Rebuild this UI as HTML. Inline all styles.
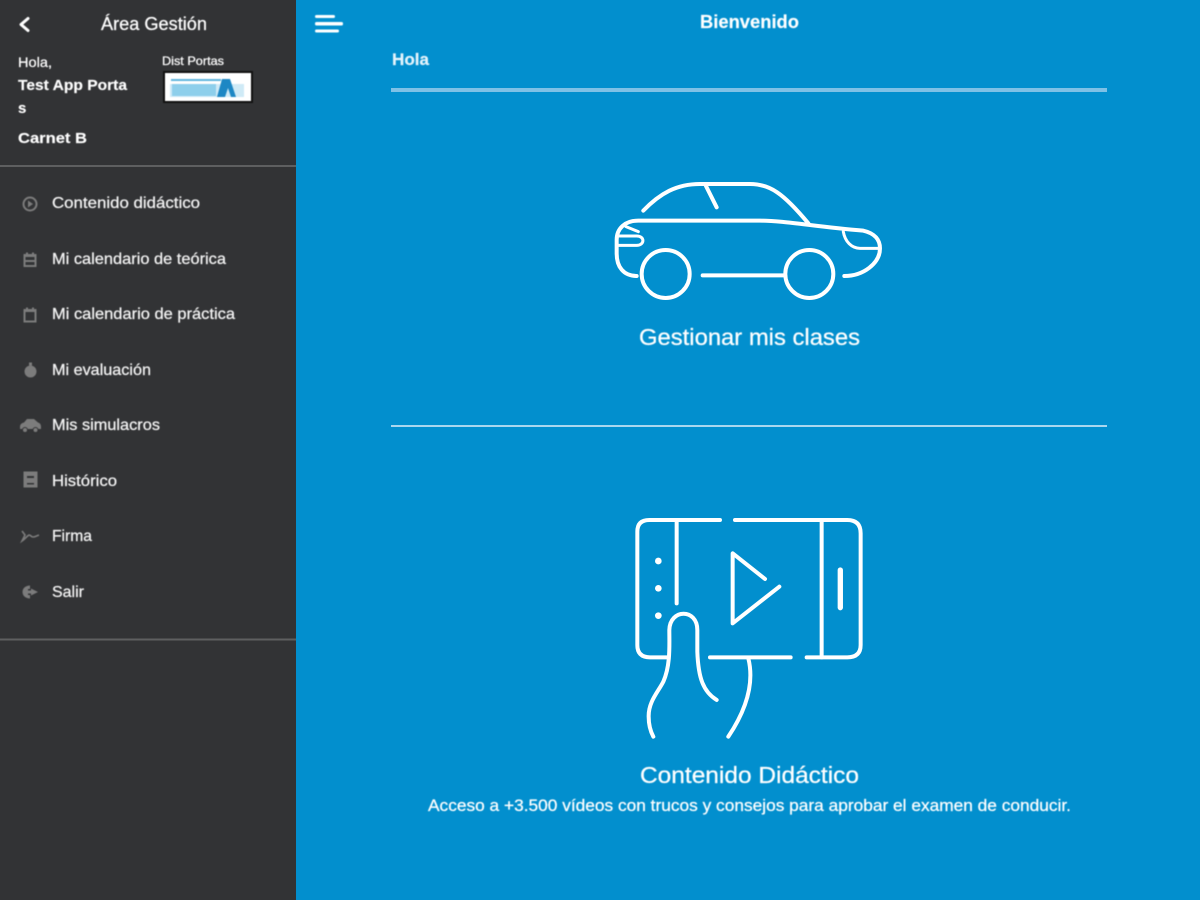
<!DOCTYPE html>
<html lang="es">
<head>
<meta charset="utf-8">
<title>Área Gestión</title>
<style>
html,body{margin:0;padding:0;width:1200px;height:900px;overflow:hidden;background:#028fce}
svg{display:block}
text{font-family:"Liberation Sans",sans-serif;fill:#fff;font-size:15px;stroke:#fff;stroke-width:.25px}
.b{font-weight:bold;stroke-width:.15px}
.m{font-size:16px;fill:#f4f4f4;stroke:#f4f4f4}
.blur{filter:blur(.6px)}
.ic{fill:#7c7c7c}
.ics{fill:none;stroke:#7c7c7c;stroke-width:2}
.l{fill:none;stroke:#fff;stroke-width:12;stroke-linecap:round;stroke-linejoin:round}
</style>
</head>
<body>
<svg width="1200" height="900" viewBox="0 0 1200 900" xmlns="http://www.w3.org/2000/svg">
<rect width="1200" height="900" fill="#028fce"/>
<rect width="296" height="900" fill="#323335"/>
<rect y="165" width="296" height="2" fill="#5e5f60"/>
<rect y="638.500" width="296" height="2" fill="#5e5f60"/>

<g class="blur">
<path d="M28 18.500L21 24.500L28 30.500" fill="none" stroke="#fff" stroke-width="3" stroke-linecap="round" stroke-linejoin="round"/>
<text x="101" y="30" style="font-size:18px" textLength="106" lengthAdjust="spacingAndGlyphs">Área Gestión</text>
<text x="18" y="67" style="font-size:14px" textLength="34" lengthAdjust="spacingAndGlyphs">Hola,</text>
<text class="b" x="18" y="90" style="font-size:15px" textLength="109" lengthAdjust="spacingAndGlyphs">Test App Porta</text>
<text class="b" x="18" y="113" style="font-size:15px">s</text>
<text class="b" x="18" y="143" style="font-size:15px" textLength="69" lengthAdjust="spacingAndGlyphs">Carnet B</text>
<text x="162" y="65" style="font-size:12px" textLength="62" lengthAdjust="spacingAndGlyphs">Dist Portas</text>

<rect x="163" y="71" width="90" height="32" fill="#111"/>
<rect x="165" y="73" width="86" height="28" fill="#fff"/>
<rect x="170" y="84" width="74" height="13" fill="#cfeaf6"/>
<rect x="171" y="79" width="50" height="2" fill="#5fb4dc"/>
<rect x="172" y="84" width="44" height="12" fill="#8ecfeb"/>
<path d="M217 97l5-18h8l6 18h-5l-3-9-3 9z" fill="#1d87c4"/>

<text class="m" x="52" y="208" textLength="148" lengthAdjust="spacingAndGlyphs">Contenido didáctico</text>
<text class="m" x="52" y="264" textLength="174" lengthAdjust="spacingAndGlyphs">Mi calendario de teórica</text>
<text class="m" x="52" y="319" textLength="183" lengthAdjust="spacingAndGlyphs">Mi calendario de práctica</text>
<text class="m" x="52" y="375" textLength="99" lengthAdjust="spacingAndGlyphs">Mi evaluación</text>
<text class="m" x="52" y="430" textLength="108" lengthAdjust="spacingAndGlyphs">Mis simulacros</text>
<text class="m" x="52" y="486" textLength="65" lengthAdjust="spacingAndGlyphs">Histórico</text>
<text class="m" x="52" y="541" textLength="40" lengthAdjust="spacingAndGlyphs">Firma</text>
<text class="m" x="52" y="597" textLength="32" lengthAdjust="spacingAndGlyphs">Salir</text>

<circle class="ics" cx="30" cy="204" r="6.500"/>
<path class="ic" d="M28 200.500l5 3.500-5 3.500z"/>
<path class="ic" fill-rule="evenodd" d="M23.500 254h2.500v-1.500h2v1.500h4v-1.500h2v1.500h2.500v13h-13zM25.500 257v3h9v-3zM25.500 262v3h9v-3z"/>
<path class="ic" fill-rule="evenodd" d="M23.500 309h2.500v-1.500h2v1.500h4v-1.500h2v1.500h2.500v13.500h-13zM25.500 312v8.500h9v-8.500z"/>
<circle class="ic" cx="30.500" cy="371.500" r="6"/>
<rect class="ic" x="29" y="362.500" width="3" height="3"/>
<path class="ic" fill-rule="evenodd" d="M20 427c0-3 2-4 4-4.500l3-3.500h7l4 3.500c2 .5 3 2 3 4.500v2H20z"/>
<circle cx="25" cy="430" r="2.500" fill="#7c7c7c" stroke="#323335"/>
<circle cx="35.500" cy="430" r="2.500" fill="#7c7c7c" stroke="#323335"/>
<path class="ic" fill-rule="evenodd" d="M23.500 471.500h14v16h-14zM27 476v2h7v-2zM27 483v1.500h7V483z"/>
<path d="M22 531l3 4-3 6c3-2 5-5 7-6 2 0 2 2 4 2s3-1 6-2" fill="none" stroke="#7c7c7c" stroke-width="1.600"/>
<path class="ic" d="M30 585.500c-4 0-7.500 2.500-7.500 6.500s3.500 6.500 7.500 6.500v-3.500h-2v-6h2z"/>
<path class="ic" d="M31 588.500l7 3.500-7 3.500v-2h-3v-3h3z"/>

<rect x="315" y="15" width="20" height="3" rx="1.500" fill="#fff"/>
<rect x="315" y="22" width="28" height="3.500" rx="1.500" fill="#fff"/>
<rect x="315" y="29.500" width="24" height="3" rx="1.500" fill="#fff"/>

<text class="b" x="700" y="28" style="font-size:18px" textLength="99" lengthAdjust="spacingAndGlyphs">Bienvenido</text>
<text class="b" x="392" y="65" style="font-size:16.500px;fill:#e4f3fb" textLength="37" lengthAdjust="spacingAndGlyphs">Hola</text>
<text x="639" y="345" style="font-size:23px" textLength="221" lengthAdjust="spacingAndGlyphs">Gestionar mis clases</text>
<text x="640" y="783" style="font-size:23px" textLength="219" lengthAdjust="spacingAndGlyphs">Contenido Didáctico</text>
<text x="428" y="811" style="font-size:16.500px" textLength="643" lengthAdjust="spacingAndGlyphs">Acceso a +3.500 vídeos con trucos y consejos para aprobar el examen de conducir.</text>
</g>

<rect x="391" y="88" width="716" height="4" fill="#7fc1e6"/>
<rect x="391" y="425" width="716" height="2" fill="#a9d7ef"/>

<g transform="translate(600 170) scale(.3333)" class="blur">
<path class="l" d="M130 122C180 70 230 42 300 42L450 42C510 42 550 70 625 160"/>
<path class="l" d="M318 48L350 112"/>
<path class="l" d="M110 318C70 318 50 290 50 250L50 210C50 175 75 152 115 152L480 152C560 152 640 170 790 182C825 190 840 210 840 235C840 280 790 318 733 318"/>
<path class="l" style="stroke-width:9" d="M55 198L110 198C135 198 135 226 110 226L55 226"/>
<path class="l" style="stroke-width:9" d="M78 170L115 185"/>
<path class="l" style="stroke-width:9" d="M730 185C735 215 755 235 780 235L838 235"/>
<circle class="l" cx="197" cy="312" r="72"/>
<circle class="l" cx="628" cy="312" r="72"/>
<path class="l" d="M308 316L555 316"/>
</g>

<g transform="translate(620 505) scale(.3333)" class="blur">
<path class="l" d="M300 45L88 45Q52 45 52 80L52 420Q52 457 90 457L140 457"/>
<path class="l" d="M345 45L682 45Q722 45 722 85L722 420Q722 457 682 457L560 457"/>
<path class="l" d="M270 457L512 457"/>
<path class="l" d="M170 48L170 295"/>
<path class="l" d="M605 48L605 457"/>
<circle cx="115" cy="168" r="10" fill="#fff"/>
<circle cx="115" cy="250" r="10" fill="#fff"/>
<circle cx="115" cy="332" r="10" fill="#fff"/>
<path class="l" style="stroke-width:16" d="M661 195L661 308"/>
<path class="l" d="M435 222L338 145L338 355L478 245"/>
<path class="l" d="M290 585C250 560 235 520 232 440L232 375C232 310 150 310 148 375C148 420 152 480 130 530C115 560 85 590 86 635C86 660 92 680 100 695"/>
<path class="l" d="M385 460C405 540 375 620 325 695"/>
</g>
</svg>
</body>
</html>
